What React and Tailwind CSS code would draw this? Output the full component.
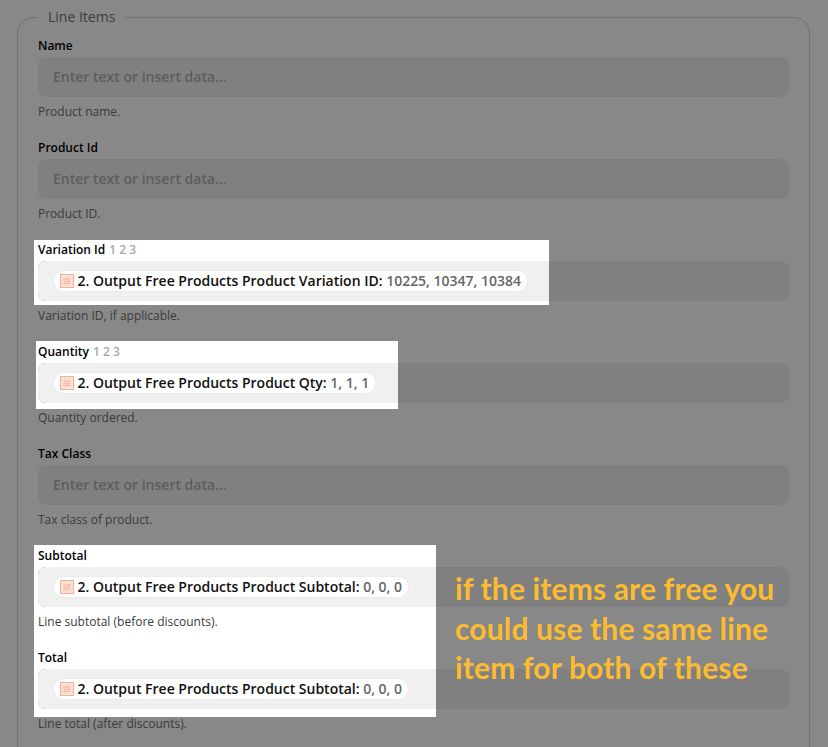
const sans = { fontFamily: '"Open Sans", "Noto Sans", sans-serif' };

function Chip({ label, value }) {
  return (
    <span className="relative inline-flex h-[22px] items-center rounded-full border border-[#ececec] bg-white pl-[6px] pr-[6px]">
      <svg width="14" height="14" viewBox="0 0 14 14" className="mr-[3.5px] shrink-0">
        <rect x="0.5" y="0.5" width="13" height="13" fill="#fde0d6" stroke="#f8ad96" />
        <path d="M3.5 5.2c1.5-.8 2.5.8 3.5 0s2-.8 3.5 0M3.5 7.4c1.5-.8 2.5.8 3.5 0s2-.8 3.5 0M3.5 9.6c1.5-.8 2.5.8 3.5 0s2-.8 3.5 0" fill="none" stroke="#f6a48b" strokeWidth="1" />
      </svg>
      <span className="whitespace-nowrap text-[14px] font-semibold leading-[20px] tracking-[-0.01px] text-[#111]">
        {label}: <span className="text-[#666]">{value}</span>
      </span>
    </span>
  );
}

function Field({ label, hint, help, chip, lit, spotClass }) {
  return (
    <div className="relative h-[102px]">
      {spotClass && <div className={`absolute bg-white ${spotClass}`} />}
      <div className="relative flex h-[20px] items-center gap-1 pt-[2px] text-[12px] font-semibold leading-[16px] text-black">
        <span>{label}</span>
        {hint && <span className="text-[#a8a8a8]">{hint}</span>}
      </div>
      <div className="relative mt-[2px] h-[40px] overflow-hidden rounded-[8px] bg-[#808080]">
        {lit && <div className={`absolute inset-y-0 left-0 bg-[#f0f0f0] ${lit}`} />}
        <div className="relative flex h-full items-center pl-[15px]">
          {chip ? (
            <Chip {...chip} />
          ) : (
            <span className="mb-[2px] text-[14px] font-semibold text-[#5d5d5d]">Enter text or insert data...</span>
          )}
        </div>
      </div>
      <p className="relative mt-[7px] text-[12px] leading-[16px] text-[#3a3a3a]">{help}</p>
    </div>
  );
}

export default function App() {
  return (
    <div className="relative h-[747px] w-[828px] overflow-hidden bg-[#888888]" style={sans}>
      <fieldset className="ml-[17px] mr-[18px] mt-[7px] h-[800px] rounded-[16px] border border-[#737373] px-[20px]">
        <legend className="ml-[0px] px-[10px] text-[14px] leading-[20px] text-[#3d3d3d]">Line Items</legend>
        <div className="mt-[8px]">
          <Field label="Name" help="Product name." />
          <Field label="Product Id" help="Product ID." />
          <Field
            label="Variation Id"
            hint="1 2 3"
            help="Variation ID, if applicable."
            lit="w-[511px]"
            spotClass="-left-[4px] top-[1px] w-[515px] h-[65px]"
            chip={{ label: "2. Output Free Products Product Variation ID", value: "10225, 10347, 10384" }}
          />
          <Field
            label="Quantity"
            hint="1 2 3"
            help="Quantity ordered."
            lit="w-[360px]"
            spotClass="-left-[2px] top-[0px] w-[362px] h-[68px]"
            chip={{ label: "2. Output Free Products Product Qty", value: "1, 1, 1" }}
          />
          <Field label="Tax Class" help="Tax class of product." />
          <Field
            label="Subtotal"
            help="Line subtotal (before discounts)."
            lit="w-[398px]"
            spotClass="-left-[4px] top-[0px] w-[402px] h-[172px]"
            chip={{ label: "2. Output Free Products Product Subtotal", value: "0, 0, 0" }}
          />
          <Field
            label="Total"
            help="Line total (after discounts)."
            lit="w-[398px]"
            chip={{ label: "2. Output Free Products Product Subtotal", value: "0, 0, 0" }}
          />
        </div>
      </fieldset>
      <div
        className="absolute left-[455px] top-[569px] text-[30px] font-bold leading-[39.5px] tracking-[0.15px] text-[#fcbc30]"
        style={{ fontFamily: '"Lato", sans-serif' }}
      >
        <div>if the items are free you</div>
        <div>could use the same line</div>
        <div>item for both of these</div>
      </div>
    </div>
  );
}
